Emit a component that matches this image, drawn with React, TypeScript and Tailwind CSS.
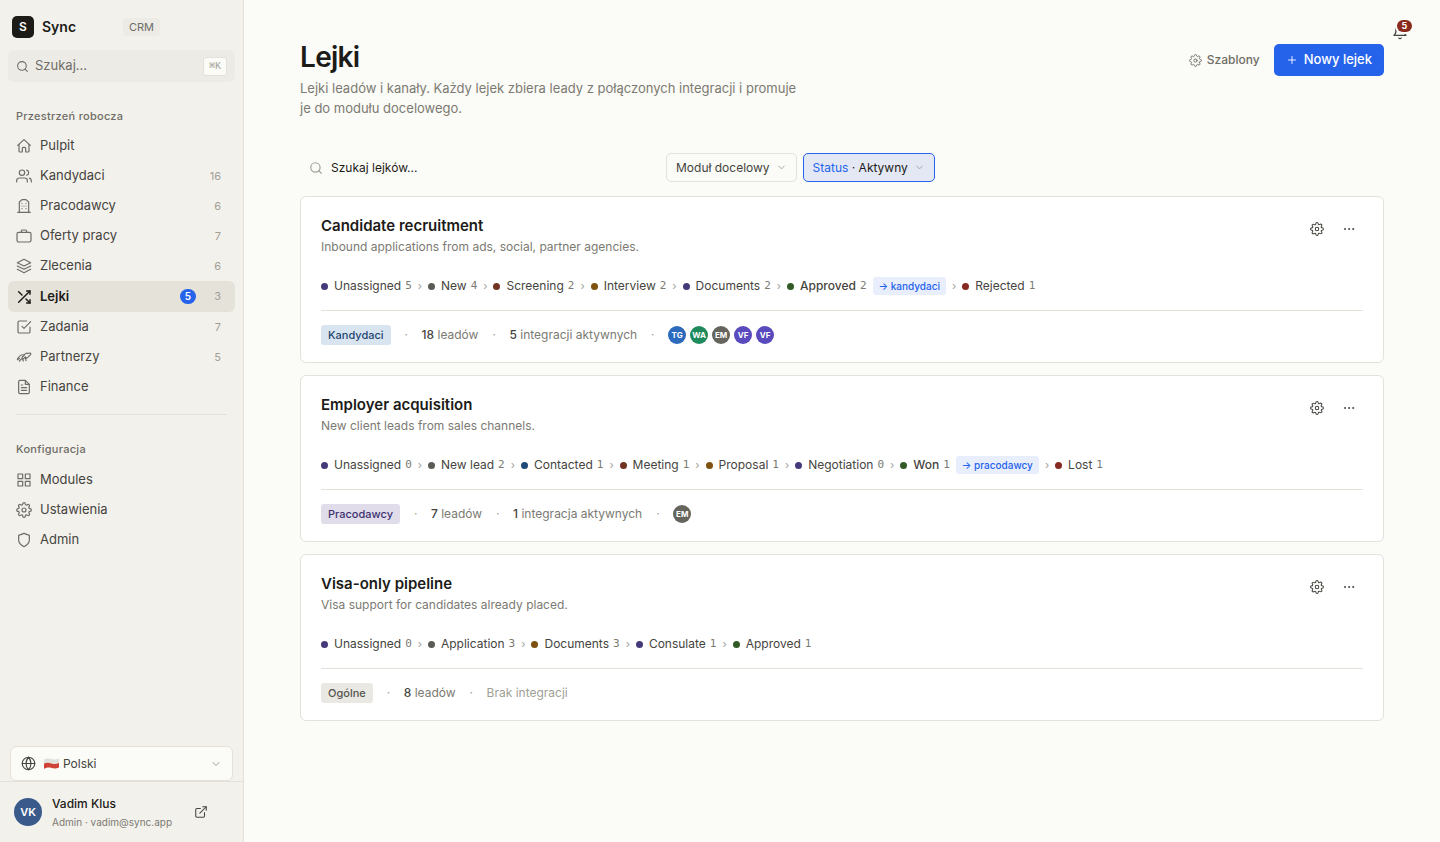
import type { ComponentType, ReactNode } from 'react';
import clsx from 'clsx';
import {
  FiBell,
  FiCheckSquare,
  FiChevronDown,
  FiExternalLink,
  FiFileText,
  FiGlobe,
  FiGrid,
  FiLayers,
  FiMoreHorizontal,
  FiPlus,
  FiSearch,
  FiSettings,
  FiShield,
  FiShuffle,
  FiUsers,
} from 'react-icons/fi';

interface IconProps {
  className?: string;
  size?: number;
  strokeWidth?: number;
}

type Icon = ComponentType<IconProps>;

function StrokeIcon({ size = 16, strokeWidth = 1.5, className, children }: IconProps & { children: ReactNode }) {
  return (
    <svg
      width={size}
      height={size}
      viewBox="0 0 24 24"
      fill="none"
      stroke="currentColor"
      strokeWidth={strokeWidth}
      strokeLinecap="round"
      strokeLinejoin="round"
      className={className}
      aria-hidden="true"
    >
      {children}
    </svg>
  );
}

function HomeIcon(props: IconProps) {
  return (
    <StrokeIcon {...props}>
      <path d="M2.5 11 12 2.500l9.500 8.500" />
      <path d="M4.500 9.500V19.500a1.500 1.500 0 0 0 1.500 1.500h3.500v-5.500a1.500 1.500 0 0 1 1.500-1.500h2a1.500 1.500 0 0 1 1.500 1.500V21H18a1.500 1.500 0 0 0 1.500-1.500V9.500" />
    </StrokeIcon>
  );
}

function BuildingIcon(props: IconProps) {
  return (
    <StrokeIcon {...props}>
      <path d="M2.500 21.500h19" />
      <path d="M5 21.500V6l4-3.500h6L19 6v15.500" />
      <path d="M9 8h.01M15 8h.01M9 12h.01M12 12h.01M15 12h.01M9 16h.01M15 16h.01" />
    </StrokeIcon>
  );
}

function BriefcaseIcon(props: IconProps) {
  return (
    <StrokeIcon {...props}>
      <rect x="1.500" y="6.500" width="21" height="14.500" rx="2.500" />
      <path d="M8 6.500V4.500A1.500 1.500 0 0 1 9.500 3h5A1.500 1.500 0 0 1 16 4.500v2" />
    </StrokeIcon>
  );
}

function HandshakeIcon(props: IconProps) {
  return (
    <StrokeIcon {...props}>
      <path d="M2 15.500C4.500 11 8 7.500 12.500 9L9 13a1.500 1.500 0 0 0 2.500 1.500L14 12l2 2 6-5.500c1-2-2-3.500-4-1.500-1.500-1.500-4-1-5.500 2" />
      <path d="m2.500 16 2.500-2M5 18l3-3M14 13l1 4.500M10 15l1 3" />
    </StrokeIcon>
  );
}

function PolishFlag() {
  return (
    <svg width="15" height="11" viewBox="0 0 15 11" aria-hidden="true">
      <path d="M0 1.500C3 0 5 .3 7.500 1S12 1.500 15 .5v5H0z" fill="#e0e0dd" />
      <path d="M0 5.500c3-1.200 5-.8 7.500 0s4.500.4 7.500-.5v4.500c-3 1.200-5 1-7.500.4S3 9.500 0 10.800z" fill="#cf4238" />
    </svg>
  );
}

interface NavEntry {
  label: string;
  icon: Icon;
  count?: number;
  badge?: number;
  active?: boolean;
}

const WORKSPACE: NavEntry[] = [
  { label: 'Pulpit', icon: HomeIcon },
  { label: 'Kandydaci', icon: FiUsers, count: 16 },
  { label: 'Pracodawcy', icon: BuildingIcon, count: 6 },
  { label: 'Oferty pracy', icon: BriefcaseIcon, count: 7 },
  { label: 'Zlecenia', icon: FiLayers, count: 6 },
  { label: 'Lejki', icon: FiShuffle, count: 3, badge: 5, active: true },
  { label: 'Zadania', icon: FiCheckSquare, count: 7 },
  { label: 'Partnerzy', icon: HandshakeIcon, count: 5 },
  { label: 'Finance', icon: FiFileText },
];

const CONFIG: NavEntry[] = [
  { label: 'Modules', icon: FiGrid },
  { label: 'Ustawienia', icon: FiSettings },
  { label: 'Admin', icon: FiShield },
];

interface Stage {
  name: string;
  count: number;
  dot: string;
  target?: string;
}

interface Funnel {
  title: string;
  description: string;
  stages: Stage[];
  module: string;
  moduleClass: string;
  leads: number;
  integrations: number;
  integrationsLabel: string;
  channels: { code: string; color: string }[];
}

const FUNNELS: Funnel[] = [
  {
    title: 'Candidate recruitment',
    description: 'Inbound applications from ads, social, partner agencies.',
    stages: [
      { name: 'Unassigned', count: 5, dot: 'bg-[#45397a]' },
      { name: 'New', count: 4, dot: 'bg-[#5c5c57]' },
      { name: 'Screening', count: 2, dot: 'bg-[#703420]' },
      { name: 'Interview', count: 2, dot: 'bg-[#7d5210]' },
      { name: 'Documents', count: 2, dot: 'bg-[#45397a]' },
      { name: 'Approved', count: 2, dot: 'bg-[#315a26]', target: 'kandydaci' },
      { name: 'Rejected', count: 1, dot: 'bg-[#862920]' },
    ],
    module: 'Kandydaci',
    moduleClass: 'bg-[#d8e5f0] text-[#1f4570]',
    leads: 18,
    integrations: 5,
    integrationsLabel: 'integracji aktywnych',
    channels: [
      { code: 'TG', color: 'bg-[#2b6abc]' },
      { code: 'WA', color: 'bg-[#1f8a5b]' },
      { code: 'EM', color: 'bg-[#65655e]' },
      { code: 'VF', color: 'bg-[#594abd]' },
      { code: 'VF', color: 'bg-[#594abd]' },
    ],
  },
  {
    title: 'Employer acquisition',
    description: 'New client leads from sales channels.',
    stages: [
      { name: 'Unassigned', count: 0, dot: 'bg-[#45397a]' },
      { name: 'New lead', count: 2, dot: 'bg-[#5c5c57]' },
      { name: 'Contacted', count: 1, dot: 'bg-[#1f4a78]' },
      { name: 'Meeting', count: 1, dot: 'bg-[#703420]' },
      { name: 'Proposal', count: 1, dot: 'bg-[#7d5210]' },
      { name: 'Negotiation', count: 0, dot: 'bg-[#45397a]' },
      { name: 'Won', count: 1, dot: 'bg-[#315a26]', target: 'pracodawcy' },
      { name: 'Lost', count: 1, dot: 'bg-[#862920]' },
    ],
    module: 'Pracodawcy',
    moduleClass: 'bg-[#e0dcea] text-[#3d3270]',
    leads: 7,
    integrations: 1,
    integrationsLabel: 'integracja aktywnych',
    channels: [{ code: 'EM', color: 'bg-[#65655e]' }],
  },
  {
    title: 'Visa-only pipeline',
    description: 'Visa support for candidates already placed.',
    stages: [
      { name: 'Unassigned', count: 0, dot: 'bg-[#45397a]' },
      { name: 'Application', count: 3, dot: 'bg-[#5c5c57]' },
      { name: 'Documents', count: 3, dot: 'bg-[#7d5210]' },
      { name: 'Consulate', count: 1, dot: 'bg-[#45397a]' },
      { name: 'Approved', count: 1, dot: 'bg-[#315a26]' },
    ],
    module: 'Ogólne',
    moduleClass: 'bg-[#e9e8e3] text-[#55554f]',
    leads: 8,
    integrations: 0,
    integrationsLabel: '',
    channels: [],
  },
];

function NavItem({ entry }: { entry: NavEntry }) {
  const { label, icon: ItemIcon, count, badge, active } = entry;
  return (
    <li>
      <a
        href="#"
        aria-current={active ? 'page' : undefined}
        className={clsx(
          'flex items-center gap-2 rounded-md pr-3.5 pl-2 text-[13px]',
          active ? 'h-[31px] bg-[#e5e2da] font-semibold text-[#1c1b17]' : 'h-[30px] text-[#45443e]',
        )}
      >
        <ItemIcon
          size={16}
          strokeWidth={active ? 2.2 : 1.8}
          className={active ? 'text-[#1c1b17]' : 'text-[#6e6d66]'}
        />
        <span className="flex-1">{label}</span>
        {badge !== undefined && (
          <span className="flex h-[15px] w-4 items-center justify-center rounded-full bg-[#2563eb] text-[10px] text-white">
            {badge}
          </span>
        )}
        {count !== undefined && (
          <span className="w-[17px] text-right text-[11px] font-normal text-[#a09f97]">{count}</span>
        )}
      </a>
    </li>
  );
}

function Sidebar() {
  return (
    <aside className="flex w-[244px] shrink-0 flex-col border-r border-[#e3e1d9] bg-[#f3f1ec]">
      <div className="flex items-center px-3 pt-4">
        <span className="flex size-[22px] items-center justify-center rounded-[5px] bg-[#1c1b17] text-xs font-semibold text-white">
          S
        </span>
        <span className="ml-2 w-[81px] text-sm font-semibold text-[#1c1b17]">Sync</span>
        <span className="rounded bg-[#edebe6] px-1.5 text-[11px] leading-[18px] text-[#6e6d66]">CRM</span>
      </div>

      <button
        type="button"
        className="mx-2 mt-3 flex h-8 items-center gap-1.5 rounded-md bg-[#edebe6] px-2 text-left text-[13px] text-[#6e6d66]"
      >
        <FiSearch size={13} strokeWidth={2} />
        <span className="flex-1">Szukaj...</span>
        <kbd className="rounded-[3px] border border-[#e3e1d9] bg-[#fbfbf7] px-[5px] font-['Liberation_Mono',monospace] text-[10px] leading-[17px] text-[#a09f97]">
          ⌘K
        </kbd>
      </button>

      <nav className="flex flex-col px-2 pt-[26px]">
        <h2 className="px-2 pb-[7px] text-[11px] leading-4 font-medium tracking-wide text-[#6e6d66]">
          Przestrzeń robocza
        </h2>
        <ul>
          {WORKSPACE.map((entry) => (
            <NavItem key={entry.label} entry={entry} />
          ))}
        </ul>
        <hr className="mx-2 mt-3 border-[#e3e1d9]" />
        <h2 className="px-2 pt-[26px] pb-2 text-[11px] leading-4 font-medium tracking-wide text-[#6e6d66]">
          Konfiguracja
        </h2>
        <ul>
          {CONFIG.map((entry) => (
            <NavItem key={entry.label} entry={entry} />
          ))}
        </ul>
      </nav>

      <div className="mt-auto px-2.5">
        <label className="flex h-[35px] items-center rounded-md border border-[#e3e1d9] bg-[#fbfbf7] px-2.5 text-[#45443e]">
          <FiGlobe size={15} strokeWidth={1.8} className="mr-2" />
          <PolishFlag />
          <select aria-label="Język" className="ml-1 flex-1 appearance-none bg-transparent text-xs outline-none">
            <option>Polski</option>
          </select>
          <FiChevronDown size={12} className="text-[#a09f97]" />
        </label>
      </div>

      <div className="flex h-[61px] items-center border-t border-[#e3e1d9] px-3.5">
        <span className="flex size-7 items-center justify-center rounded-full bg-[#3a5a8c] text-[11px] font-semibold text-white">
          VK
        </span>
        <div className="ml-2.5 w-[142px] pt-px">
          <p className="text-xs leading-[18px] font-medium text-[#1c1b17]">Vadim Klus</p>
          <p className="text-[10px] leading-[18px] text-[#7b7a72]">Admin · vadim@sync.app</p>
        </div>
        <a href="#" aria-label="Otwórz profil" className="text-[#45443e]">
          <FiExternalLink size={14} strokeWidth={1.8} />
        </a>
      </div>
    </aside>
  );
}

function StageItem({ stage }: { stage: Stage }) {
  return (
    <span className="flex items-center gap-1.5">
      <span className={clsx('size-[7px] rounded-full', stage.dot)} />
      <span className="flex items-center gap-1">
        <span className={clsx('text-xs text-[#45443e]', stage.target && 'font-medium')}>{stage.name}</span>
        <span className="font-['DejaVu_Sans_Mono',monospace] text-[11px] text-[#7b7a72]">{stage.count}</span>
      </span>
      {stage.target && (
        <span className="rounded-[3px] bg-[#e8eefb] px-1.5 text-[10px] leading-[18px] font-medium text-[#2563eb]">
          → {stage.target}
        </span>
      )}
    </span>
  );
}

function Separator() {
  return <span className="w-[3px] text-center text-[#a09f97]">·</span>;
}

function FunnelCard({ funnel }: { funnel: Funnel }) {
  return (
    <article className="rounded-md border border-[#e3e1d9] bg-white px-5 pt-[18px] pb-[17px]">
      <header className="flex items-start justify-between">
        <div>
          <h2 className="text-[15px] leading-[22px] font-semibold text-[#1c1b17]">{funnel.title}</h2>
          <p className="text-xs leading-5 text-[#7b7a72]">{funnel.description}</p>
        </div>
        <div className="flex gap-1 text-[#45443e]">
          <button type="button" aria-label="Ustawienia lejka" className="flex size-7 items-center justify-center">
            <FiSettings size={14} strokeWidth={1.8} />
          </button>
          <button type="button" aria-label="Więcej" className="flex size-7 items-center justify-center">
            <FiMoreHorizontal size={14} strokeWidth={1.6} />
          </button>
        </div>
      </header>

      <div className="flex flex-wrap items-center gap-1.5 border-b border-[#e3e1d9] pt-5 pb-[15px] leading-[18px]">
        {funnel.stages.map((stage, index) => (
          <div key={stage.name} className="flex items-center gap-1.5">
            {index > 0 && <span className="text-[11px] text-[#a09f97]">›</span>}
            <StageItem stage={stage} />
          </div>
        ))}
      </div>

      <footer className="flex items-center gap-3.5 pt-3.5 text-xs text-[#7b7a72]">
        <span className={clsx('rounded-[3px] px-[7px] text-[11px] leading-5 font-medium', funnel.moduleClass)}>
          {funnel.module}
        </span>
        <Separator />
        <span>
          <b className="font-medium text-[#45443e]">{funnel.leads}</b> leadów
        </span>
        <Separator />
        {funnel.integrations > 0 ? (
          <>
            <span>
              <b className="font-medium text-[#45443e]">{funnel.integrations}</b> {funnel.integrationsLabel}
            </span>
            <Separator />
            <span className="flex gap-1">
              {funnel.channels.map((channel, index) => (
                <span
                  key={index}
                  className={clsx(
                    'flex size-[18px] items-center justify-center rounded-full text-[8px] font-bold text-white',
                    channel.color,
                  )}
                >
                  {channel.code}
                </span>
              ))}
            </span>
          </>
        ) : (
          <span className="text-[#a09f97]">Brak integracji</span>
        )}
      </footer>
    </article>
  );
}

export default function App() {
  return (
    <div className="flex min-h-screen bg-[#fbfbf7] font-['Inter','Liberation_Sans',sans-serif] text-[#1c1b17]">
      <Sidebar />

      <main className="relative min-w-0 flex-1 px-14 pt-10">
        <button type="button" aria-label="Powiadomienia" className="absolute top-6 right-8 text-[#45443e]">
          <FiBell size={16} strokeWidth={2} />
          <span className="absolute -top-1 left-[5px] flex h-3 w-[15px] items-center justify-center rounded-full bg-[#8a2a1c] text-[9px] font-bold text-white ring-2 ring-[#fbfbf7]">
            5
          </span>
        </button>

        <header className="flex items-start justify-between">
          <div>
            <h1 className="text-[28px] leading-[34px] font-semibold tracking-tight">Lejki</h1>
            <p className="mt-1 max-w-[508px] text-[13px] leading-5 text-[#7b7a72]">
              Lejki leadów i kanały. Każdy lejek zbiera leady z połączonych integracji i promuje je do modułu docelowego.
            </p>
          </div>
          <div className="flex items-center gap-3.5 pt-1">
            <button type="button" className="flex items-center gap-[5px] text-xs font-medium text-[#6e6d66]">
              <FiSettings size={13} strokeWidth={1.8} />
              Szablony
            </button>
            <button
              type="button"
              className="flex h-8 items-center gap-1.5 rounded-[5px] bg-[#2563eb] px-3 text-[13px] font-medium text-white"
            >
              <FiPlus size={12} strokeWidth={1.8} />
              Nowy lejek
            </button>
          </div>
        </header>

        <div className="mt-[35px] flex items-center gap-1.5">
          <label className="flex h-[29px] w-[360px] items-center gap-2 px-[9px]">
            <FiSearch size={14} className="text-[#a09f97]" />
            <input
              type="search"
              aria-label="Szukaj lejków"
              placeholder="Szukaj lejków..."
              className="flex-1 bg-transparent text-xs outline-none placeholder:text-[#1c1b17]"
            />
          </label>
          <button
            type="button"
            aria-haspopup="listbox"
            className="flex h-[29px] items-center gap-1.5 rounded-[5px] border border-[#e3e1d9] px-[9px] text-xs text-[#45443e]"
          >
            Moduł docelowy
            <FiChevronDown size={11} className="text-[#a09f97]" />
          </button>
          <button
            type="button"
            aria-haspopup="listbox"
            className="flex h-[29px] items-center gap-1.5 rounded-[5px] border border-[#2563eb] bg-[#e4e8f5] px-[9px] text-xs"
          >
            <span>
              <span className="text-[#2563eb]">Status</span> · Aktywny
            </span>
            <FiChevronDown size={11} className="text-[#a09f97]" />
          </button>
        </div>

        <section aria-label="Lista lejków" className="mt-3.5 flex flex-col gap-3 pb-14">
          {FUNNELS.map((funnel) => (
            <FunnelCard key={funnel.title} funnel={funnel} />
          ))}
        </section>
      </main>
    </div>
  );
}
